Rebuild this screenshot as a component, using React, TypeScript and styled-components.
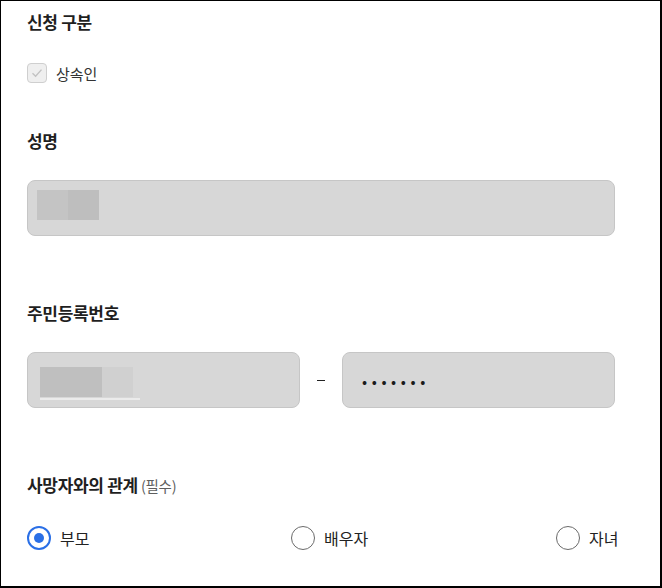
import styled, { createGlobalStyle } from 'styled-components'

const GlobalStyle = createGlobalStyle`
    html, body {
        margin: 0;
        padding: 0;
        background: #ffffff;
    }
    body {
        font-family: 'Noto Sans CJK KR', 'Noto Sans', sans-serif;
        color: #222222;
    }
`

const Frame = styled.div`
    box-sizing: border-box;
    width: 662px;
    height: 588px;
    border: 1px solid #000000;
    border-right-width: 2px;
    border-bottom-width: 2px;
    padding: 9px 30px 0 26px;
    display: flex;
    flex-direction: column;
    overflow: hidden;
`

const Section = styled.section<{ $after?: number; $gap?: number }>`
    display: flex;
    flex-direction: column;
    gap: ${({ $gap }) => $gap ?? 27}px;
    padding-bottom: ${({ $after }) => $after ?? 0}px;
`

const Title = styled.h2`
    margin: 0;
    font-size: 17px;
    line-height: 24px;
    font-weight: 700;
    color: #1f1f1f;
    letter-spacing: -0.3px;
`

const Hint = styled.span`
    font-size: 14.5px;
    font-weight: 400;
    color: #5e5e5e;
    margin-left: 3px;
`

const CheckRow = styled.label`
    display: flex;
    align-items: center;
    gap: 9px;
    height: 24px;
    font-size: 15px;
    color: #333333;
`

const CheckBox = styled.span`
    box-sizing: border-box;
    width: 20px;
    height: 20px;
    border: 1px solid #cfcfcf;
    border-radius: 4px;
    background: #efefef;
    display: flex;
    align-items: center;
    justify-content: center;
`

const Field = styled.div<{ $width?: number }>`
    box-sizing: border-box;
    height: 56px;
    width: ${({ $width }) => ($width ? `${$width}px` : '588px')};
    background: #d7d7d7;
    border: 1px solid #c6c6c6;
    border-radius: 8px;
    padding-left: 9px;
    display: flex;
    align-items: center;
`

const Blur = styled.div<{ $top?: number }>`
    display: flex;
    height: 30px;
    align-self: ${({ $top }) => ($top !== undefined ? 'flex-start' : 'auto')};
    margin-top: ${({ $top }) => $top ?? 0}px;
`

const BlurBlock = styled.span<{ $w: number; $shade: string }>`
    display: block;
    width: ${({ $w }) => $w}px;
    height: 100%;
    background: ${({ $shade }) => $shade};
`

const BlurStack = styled.div`
    display: flex;
    flex-direction: column;
    gap: 1px;
    padding-left: 3px;
    margin-top: 6px;
`

const BlurLine = styled.span`
    display: block;
    width: 100px;
    height: 2px;
    background: #ebebeb;
`

const IdRow = styled.div`
    display: flex;
    align-items: center;
`

const DashWrap = styled.span`
    width: 42px;
    display: flex;
    justify-content: center;
`

const Dash = styled.span`
    display: block;
    width: 8px;
    height: 1px;
    background: #222222;
    margin-top: 1px;
`

const Dots = styled.span`
    padding-left: 10px;
    font-size: 15px;
    letter-spacing: 4.6px;
    color: #1a1a1a;
`

const RadioRow = styled.div`
    display: grid;
    grid-template-columns: 264px 265px max-content;
    height: 24px;
    align-items: center;
`

const RadioItem = styled.label`
    display: flex;
    align-items: center;
    gap: 9px;
    font-size: 16px;
    color: #222222;
    white-space: nowrap;
`

const RadioCircle = styled.span<{ $checked?: boolean }>`
    box-sizing: border-box;
    width: 24px;
    height: 24px;
    border-radius: 50%;
    border: ${({ $checked }) => ($checked ? '2px solid #2a6fe6' : '1px solid #6b6b6b')};
    background: #ffffff;
    display: flex;
    align-items: center;
    justify-content: center;
    &::after {
        content: '';
        display: ${({ $checked }) => ($checked ? 'block' : 'none')};
        width: 10px;
        height: 10px;
        border-radius: 50%;
        background: #2a6fe6;
    }
`

const relations = [
    { label: '부모', checked: true },
    { label: '배우자', checked: false },
    { label: '자녀', checked: false },
]

export default function App() {
    return (
        <>
            <GlobalStyle />
            <Frame>
                <Section $after={44}>
                    <Title>신청 구분</Title>
                    <CheckRow>
                        <CheckBox>
                            <svg width="14" height="14" viewBox="0 0 14 14">
                                <path d="M2.5 7.2 L5.6 10.2 L11.5 3.6" fill="none" stroke="#c2c2c2" strokeWidth="1.4" />
                            </svg>
                        </CheckBox>
                        상속인
                    </CheckRow>
                </Section>

                <Section $after={65}>
                    <Title>성명</Title>
                    <Field>
                        <Blur $top={9}>
                            <BlurBlock $w={31} $shade="#c4c4c4" />
                            <BlurBlock $w={31} $shade="#bebebe" />
                        </Blur>
                    </Field>
                </Section>

                <Section $after={65}>
                    <Title>주민등록번호</Title>
                    <IdRow>
                        <Field $width={273}>
                            <BlurStack>
                                <Blur>
                                    <BlurBlock $w={62} $shade="#bfbfbf" />
                                    <BlurBlock $w={31} $shade="#d0d0d0" />
                                </Blur>
                                <BlurLine />
                            </BlurStack>
                        </Field>
                        <DashWrap>
                            <Dash />
                        </DashWrap>
                        <Field $width={273}>
                            <Dots>•••••••</Dots>
                        </Field>
                    </IdRow>
                </Section>

                <Section $gap={28}>
                    <Title>
                        사망자와의 관계<Hint>(필수)</Hint>
                    </Title>
                    <RadioRow>
                        {relations.map((r) => (
                            <RadioItem key={r.label}>
                                <RadioCircle $checked={r.checked} />
                                {r.label}
                            </RadioItem>
                        ))}
                    </RadioRow>
                </Section>
            </Frame>
        </>
    )
}
